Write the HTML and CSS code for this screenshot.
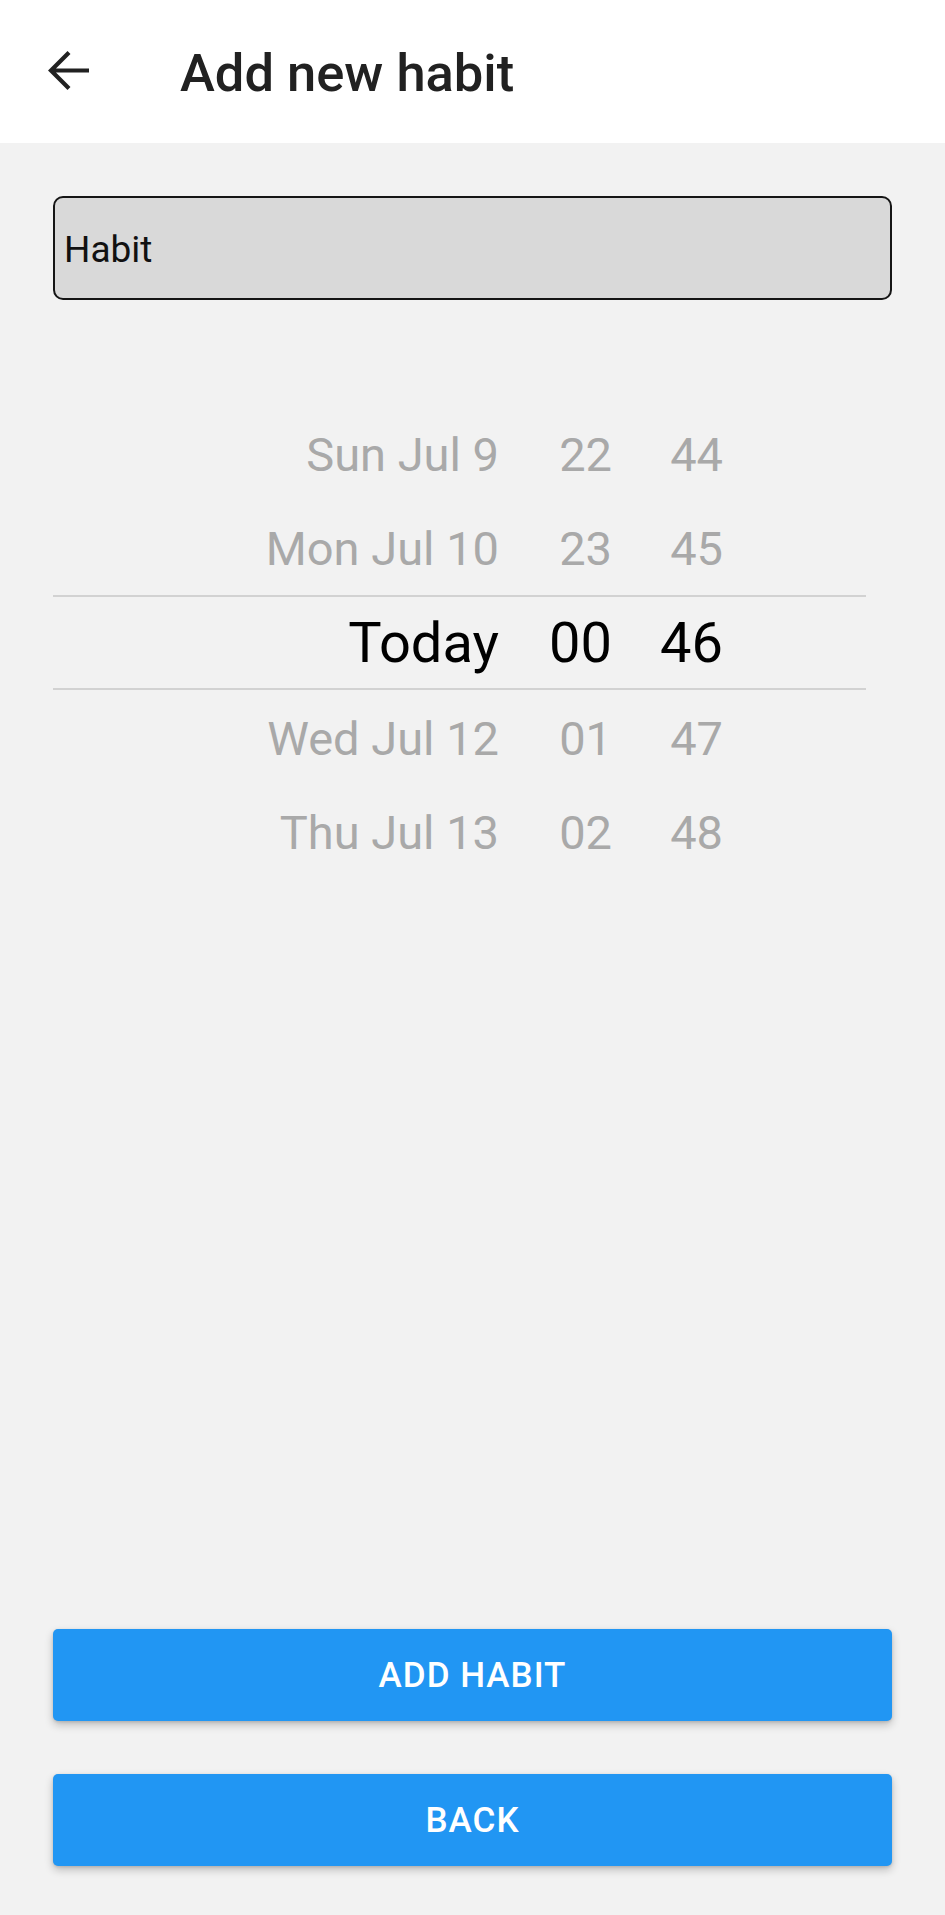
FILE: index.html
```html
<!DOCTYPE html>
<html lang="en">
<head>
<meta charset="utf-8">
<title>Add new habit</title>
<link rel="stylesheet" href="styles.css">
</head>
<body>
<div class="app">
  <header class="toolbar">
    <svg class="back-icon" width="44" height="44" viewBox="0 0 44 44" aria-hidden="true">
      <path d="M42 21.5H5 M22 3.5 L4 21.5 L22 39.5" fill="none" stroke="#212121" stroke-width="4.2" stroke-linecap="butt" stroke-linejoin="miter"/>
    </svg>
    <h1 class="title">Add new habit</h1>
  </header>

  <main class="content">
    <div class="input-box">Habit</div>

    <div class="picker">
      <div class="picker-row">
        <span class="col-date">Sun Jul 9</span><span class="col-hour">22</span><span class="col-min">44</span>
      </div>
      <div class="picker-row">
        <span class="col-date">Mon Jul 10</span><span class="col-hour">23</span><span class="col-min">45</span>
      </div>
      <div class="picker-row selected">
        <span class="col-date">Today</span><span class="col-hour">00</span><span class="col-min">46</span>
      </div>
      <div class="picker-row below">
        <span class="col-date">Wed Jul 12</span><span class="col-hour">01</span><span class="col-min">47</span>
      </div>
      <div class="picker-row below">
        <span class="col-date">Thu Jul 13</span><span class="col-hour">02</span><span class="col-min">48</span>
      </div>
    </div>
  </main>

  <footer class="actions">
    <button class="btn">ADD HABIT</button>
    <button class="btn">BACK</button>
  </footer>
</div>
</body>
</html>
```

FILE: styles.css
```css
* {
  box-sizing: border-box;
}

html, body {
  margin: 0;
  padding: 0;
}

body {
  background: #f2f2f2;
  font-family: Roboto, "Liberation Sans", sans-serif;
}

.app {
  min-height: 1915px;
  display: flex;
  flex-direction: column;
}

.toolbar {
  height: 143px;
  background: #ffffff;
  display: flex;
  align-items: center;
  padding-left: 47px;
}

.back-icon {
  display: block;
  flex: none;
  margin-top: -2px;
}

.title {
  margin: 0 0 0 89px;
  padding-top: 3px;
  font-size: 52.5px;
  font-weight: 500;
  color: #212121;
  line-height: normal;
}

.content {
  flex: 1;
  padding: 53px 53px 0 53px;
}

.input-box {
  height: 104px;
  border: 2.5px solid #151515;
  border-radius: 10px;
  background: #d9d9d9;
  display: flex;
  align-items: center;
  padding-left: 9px;
  padding-top: 2px;
  font-size: 37px;
  color: #111111;
}

.picker {
  margin-top: 108px;
  width: 813px;
}

.picker-row {
  display: grid;
  grid-template-columns: 446px 113px 111px;
  height: 94px;
  line-height: 94px;
  font-size: 47px;
  color: #a9a9a9;
}

.picker-row span {
  text-align: right;
  white-space: nowrap;
}

.picker-row.below {
  line-height: 98px;
}

.picker-row.selected {
  border-top: 2px solid #d2d2d2;
  border-bottom: 2px solid #d2d2d2;
  padding-top: 3px;
  font-size: 56px;
  color: #000000;
  height: 95px;
  margin-top: -1px;
}

.picker-row.selected span {
  line-height: 87px;
}

.actions {
  display: flex;
  flex-direction: column;
  gap: 53px;
  padding: 0 53px 49px 53px;
}

.btn {
  display: block;
  width: 100%;
  height: 92px;
  border: none;
  border-radius: 5px;
  background: #2196f3;
  color: #ffffff;
  font-family: Roboto, "Liberation Sans", sans-serif;
  font-size: 35px;
  font-weight: 500;
  letter-spacing: 1px;
  box-shadow: 0 4px 8px rgba(0, 0, 0, 0.22), 0 1px 3px rgba(0, 0, 0, 0.12);
  padding: 0;
}
```
